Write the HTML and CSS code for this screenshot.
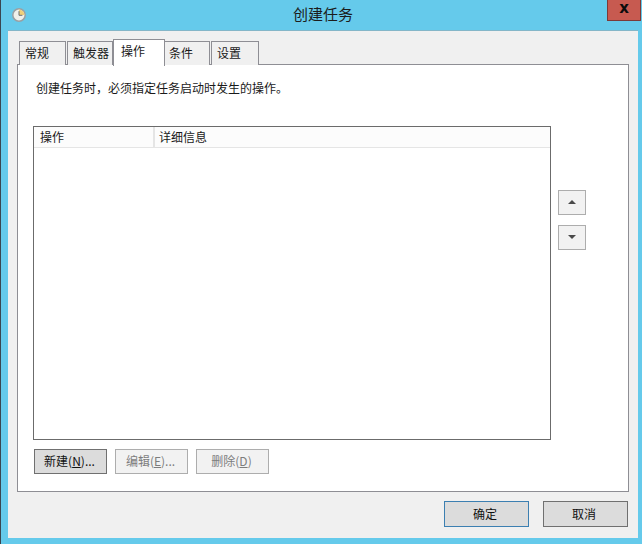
FILE: index.html
```html
<!DOCTYPE html>
<html lang="zh-CN">
<head>
<meta charset="utf-8">
<title>创建任务</title>
<link rel="stylesheet" href="styles.css">
</head>
<body>
<div class="window">
  <header class="titlebar">
    <svg class="app-icon" width="14" height="14" viewBox="0 0 14 14">
      <circle cx="7" cy="7" r="6.2" fill="#f1f0ea" stroke="#9aa0a3" stroke-width="1.5"/>
      <path d="M7 7V1.6A5.4 5.4 0 0 1 12.4 7Z" fill="#f0cf7a"/>
      <path d="M7 3.2V7.3H10.4" fill="none" stroke="#6b7075" stroke-width="1"/>
    </svg>
    <h1 class="title">创建任务</h1>
    <button class="close" type="button">x</button>
  </header>
  <main class="client">
    <nav class="tabs">
      <div class="tab tab-first">常规</div>
      <div class="tab tab-trigger">触发器</div>
      <div class="tab tab-active">操作</div>
      <div class="tab tab-cond">条件</div>
      <div class="tab tab-set">设置</div>
    </nav>
    <section class="panel">
      <p class="desc">创建任务时，必须指定任务启动时发生的操作。</p>
      <div class="list-row">
        <div class="list">
          <div class="list-head">
            <div class="col col-action">操作</div>
            <div class="col col-detail">详细信息</div>
          </div>
        </div>
        <div class="movers">
          <button class="btn btn-off mover" type="button"><span class="arrow arrow-up"></span></button>
          <button class="btn btn-off mover" type="button"><span class="arrow arrow-down"></span></button>
        </div>
      </div>
      <div class="actions">
        <button class="btn btn-main action" type="button">新建(<u>N</u>)...</button>
        <button class="btn btn-off action" type="button">编辑(<u>E</u>)...</button>
        <button class="btn btn-off action" type="button">删除(<u>D</u>)</button>
      </div>
    </section>
    <footer class="footer">
      <button class="btn btn-main dlg btn-default" type="button">确定</button>
      <button class="btn btn-main dlg" type="button">取消</button>
    </footer>
  </main>
</div>
</body>
</html>
```
FILE: styles.css
```css
* { box-sizing: border-box; }
html, body { margin: 0; padding: 0; }
body {
  width: 642px;
  height: 544px;
  overflow: hidden;
  font-family: "Noto Sans CJK SC", "Liberation Sans", sans-serif;
  font-size: 12px;
  color: #1a1a1a;
}
.window {
  width: 642px;
  height: 544px;
  background: #65caeb;
  border-left: 1px solid #3a4650;
  display: flex;
  flex-direction: column;
}
.titlebar {
  height: 30px;
  flex: none;
  display: flex;
  align-items: flex-start;
  padding-left: 11px;
}
.app-icon { margin-top: 8px; flex: none; }
.title {
  flex: 1;
  margin: 4px 0 0;
  font-size: 15px;
  font-weight: 400;
  line-height: 20px;
  text-align: center;
  padding-left: 13px;
  color: #1c1c1c;
}
.close {
  width: 34px;
  height: 21px;
  margin-right: 1px;
  padding: 0 0 4px;
  background: #c75a50;
  border: 1px solid #7c3a38;
  border-top: 0;
  font-family: "DejaVu Sans", sans-serif;
  font-size: 15px;
  font-weight: 700;
  line-height: 14px;
  color: #0c0c0c;
}
.client {
  flex: 1;
  margin: 0 4px 6px 7px;
  background: #f0f0f0;
  border-top: 1px solid #84b6c8;
  padding: 9px 9px 0;
  display: flex;
  flex-direction: column;
}
.tabs {
  display: flex;
  align-items: flex-end;
  height: 25px;
  margin-bottom: -1px;
  padding-left: 2px;
  position: relative;
  z-index: 1;
}
.tab {
  height: 24px;
  background: #f0f0f0;
  border: 1px solid #8e8e94;
  border-bottom: 0;
  padding: 1px 0 0 5px;
  line-height: 20px;
  margin-right: 1px;
}
.tab-first { width: 47px; }
.tab-trigger { width: 46px; margin-right: 0; }
.tab-active {
  width: 52px;
  height: 27px;
  background: #fff;
  margin-right: 0;
  padding: 1px 0 0 7px;
  margin-bottom: -1px;
}
.tab-cond { width: 45px; margin-right: 1px; padding-left: 4px; border-left: 0; }
.tab-set { width: 48px; padding-left: 5px; margin-right: 0; }
.panel {
  width: 612px;
  height: 428px;
  background: #fff;
  border: 1px solid #8e8e94;
  padding: 14px 15px 0;
  flex: none;
}
.desc { margin: 0; padding-left: 3px; line-height: 18px; }
.list-row { display: flex; margin-top: 29px; }
.list {
  width: 518px;
  height: 314px;
  border: 1px solid #6b6b6b;
  background: #fff;
}
.list-head {
  display: flex;
  height: 21px;
  background: #fcfcfc;
  border-bottom: 1px solid #e5e5e5;
}
.col { line-height: 20px; padding-left: 6px; }
.col-action { width: 121px; border-right: 2px solid #e5e5e5; }
.col-detail { flex: 1; padding-left: 4px; }
.movers {
  margin: 64px 0 0 7px;
  display: flex;
  flex-direction: column;
  gap: 10px;
}
.btn {
  font-family: inherit;
  font-size: 12px;
  padding: 0;
  line-height: 20px;
}
.btn-off {
  background: #f2f2f2;
  border: 1px solid #adadad;
  color: #7d7d7d;
}
.btn-main {
  background: #dcdcdc;
  border: 1px solid #707070;
  color: #111;
}
.btn-default { border-color: #3c7fb1; }
.mover {
  width: 28px;
  height: 25px;
  display: flex;
  align-items: center;
  justify-content: center;
}
.arrow { width: 0; height: 0; border-left: 4px solid transparent; border-right: 4px solid transparent; margin-bottom: 1px; }
.arrow-up { border-bottom: 4px solid #4a4a4a; }
.arrow-down { border-top: 4px solid #4a4a4a; }
.actions {
  display: flex;
  gap: 8px;
  margin: 9px 0 0 1px;
}
.action { width: 73px; height: 25px; padding-right: 2px; padding-bottom: 1px; }
.footer {
  display: flex;
  justify-content: flex-end;
  gap: 14px;
  margin-top: 9px;
  padding-right: 1px;
}
.dlg { width: 85px; height: 26px; padding-right: 3px; }
```
